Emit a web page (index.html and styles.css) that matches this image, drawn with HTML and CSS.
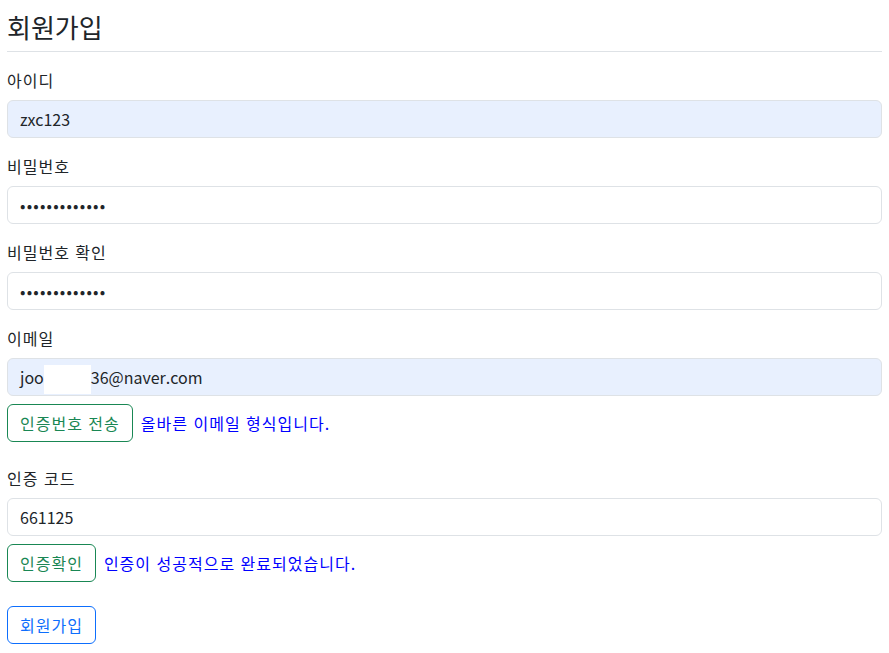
FILE: index.html
```html
<!DOCTYPE html>
<html lang="ko">
<head>
<meta charset="utf-8">
<title>회원가입</title>
<link rel="stylesheet" href="styles.css">
</head>
<body>
<main class="page">
  <h3 class="title">회원가입</h3>
  <div class="field">
    <label class="form-label">아이디</label>
    <input class="form-control autofill" type="text" value="zxc123">
  </div>
  <div class="field">
    <label class="form-label">비밀번호</label>
    <input class="form-control secret" type="password" value="1234567890123">
  </div>
  <div class="field">
    <label class="form-label">비밀번호 확인</label>
    <input class="form-control secret" type="password" value="1234567890123">
  </div>
  <div class="field tight">
    <label class="form-label">이메일</label>
    <div class="form-control autofill">joo<span class="redact"></span>36@naver.com</div>
  </div>
  <div class="verify">
    <button class="btn btn-success-outline" type="button">인증번호 전송</button>
    <span class="msg">올바른 이메일 형식입니다.</span>
  </div>
  <div class="field tight">
    <label class="form-label">인증 코드</label>
    <input class="form-control" type="text" value="661125">
  </div>
  <div class="verify">
    <button class="btn btn-success-outline" type="button">인증확인</button>
    <span class="msg">인증이 성공적으로 완료되었습니다.</span>
  </div>
  <button class="btn btn-primary-outline" type="submit">회원가입</button>
</main>
</body>
</html>
```

FILE: styles.css
```css
* { box-sizing: border-box; }
body {
  margin: 0;
  background: #fff;
  color: #212529;
  font-family: "Noto Sans CJK KR", "Noto Sans", sans-serif;
  font-size: 16px;
  line-height: 1.5;
}
.page {
  padding: 10px 7px 0 7px;
}
.title {
  margin: 0 0 16px 0;
  padding-bottom: 7px;
  border-bottom: 1px solid #dee2e6;
  font-size: 26px;
  line-height: 33.6px;
  font-weight: 400;
}
.field { margin-bottom: 16px; }
.field.tight { margin-bottom: 8px; }
.form-label {
  display: block;
  margin-bottom: 8px;
  line-height: 24px;
  letter-spacing: 1px;
}
.form-control {
  display: block;
  width: 100%;
  height: 38px;
  padding: 6px 12px;
  font: inherit;
  font-size: 16px;
  line-height: 24px;
  color: #212529;
  background: #fff;
  border: 1px solid #dee2e6;
  border-radius: 6px;
  outline: none;
}
.form-control.secret { letter-spacing: 1.2px; }
.form-control.autofill { background: #e8f0fe; }
.redact {
  display: inline-block;
  width: 47px;
  height: 29px;
  background: #fff;
  vertical-align: middle;
}
.verify {
  display: flex;
  align-items: center;
  gap: 8px;
  margin-bottom: 24px;
}
.msg { color: #0000ff; letter-spacing: 1px; }
.btn {
  display: inline-block;
  padding: 6px 12px;
  font: inherit;
  font-size: 16px;
  line-height: 24px;
  letter-spacing: 1px;
  background: transparent;
  border: 1px solid;
  border-radius: 6px;
  cursor: pointer;
}
.btn-success-outline { color: #198754; border-color: #198754; }
.btn-primary-outline { color: #0d6efd; border-color: #0d6efd; }
```
